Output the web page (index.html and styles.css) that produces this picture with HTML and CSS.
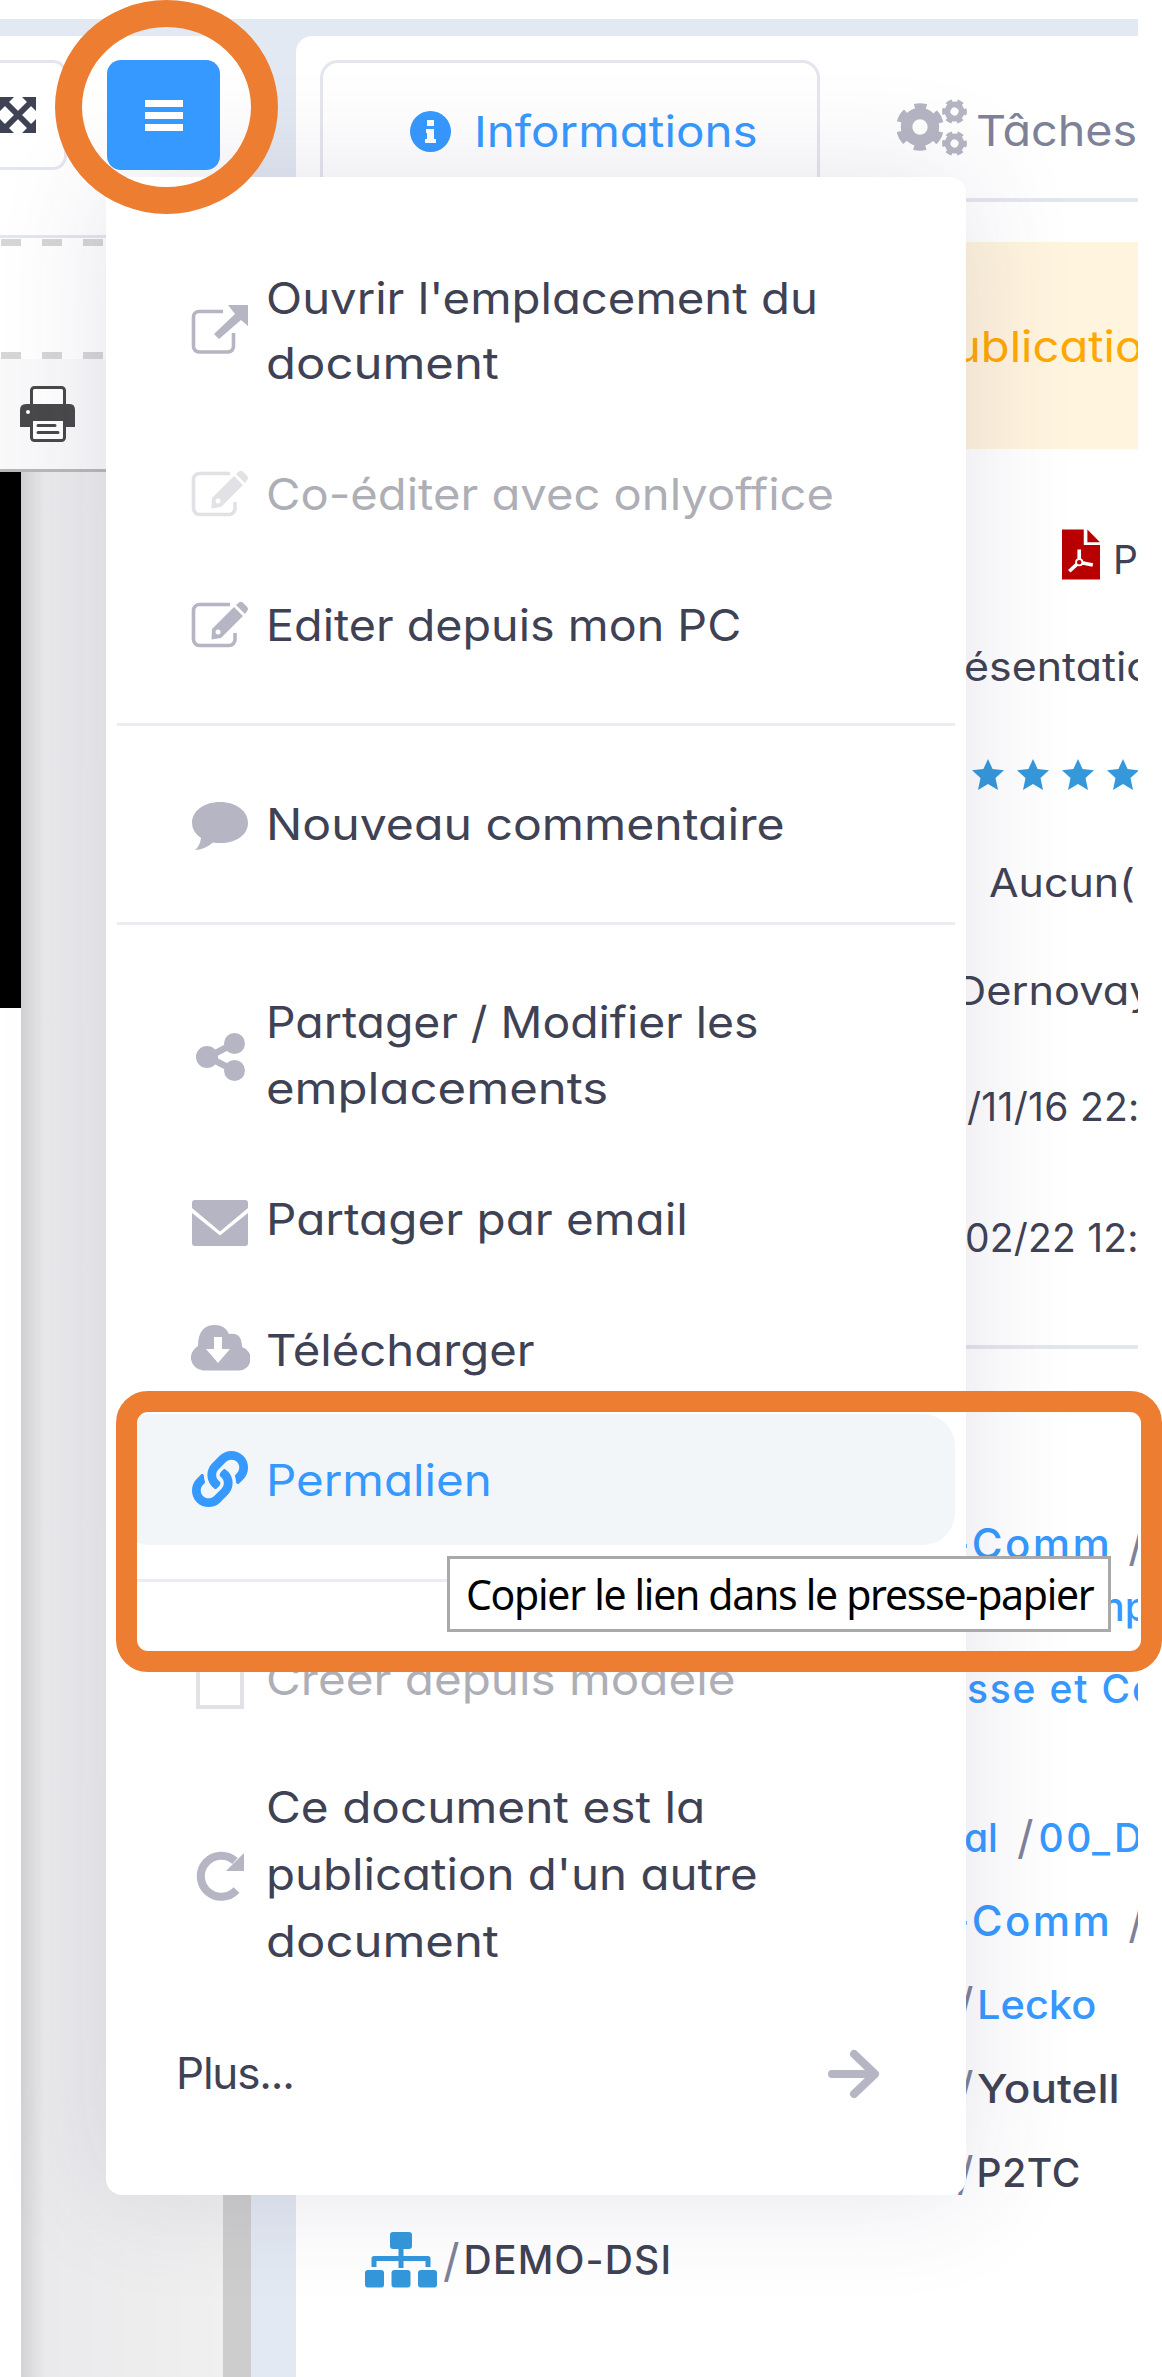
FILE: index.html
```html
<!DOCTYPE html>
<html lang="fr">
<head>
<meta charset="utf-8">
<title>Document - Permalien</title>
<link rel="stylesheet" href="styles.css">
</head>
<body>
<svg class="defs" width="0" height="0" aria-hidden="true">
  <symbol id="edit" viewBox="0 0 60 60">
    <path d="M40 8.500H9.500a6 6 0 0 0-6 6v29a6 6 0 0 0 6 6h29.500a6 6 0 0 0 6-6V37" fill="none" stroke="currentColor" stroke-width="3.600"/>
    <path d="M22 33L44 11l9 9-22 22-9.500 1.500zM46 9l3-2.500q2-1.500 4 .3l4 4q2 2 .3 4L55 18z" fill="currentColor"/>
    <circle cx="28" cy="36" r="2.500" fill="#fff"/>
  </symbol>
  <symbol id="tree" viewBox="0 0 72 56">
    <path d="M36 14V36M9 35V26.500H63V35" fill="none" stroke="currentColor" stroke-width="5" stroke-linejoin="round"/>
    <g fill="currentColor"><rect x="25" width="22" height="17" rx="3"/><rect y="38" width="19" height="17.500" rx="3"/><rect x="26.500" y="38" width="19" height="17.500" rx="3"/><rect x="53" y="38" width="19" height="17.500" rx="3"/></g>
  </symbol>
  <symbol id="star" viewBox="0 0 32 31">
    <path d="M16 0l4.600 10 11.400 1.300-8.500 7.600L26 31l-10-6-10 6 2.500-12.100L0 11.300 11.400 10z" fill="currentColor"/>
  </symbol>
  <symbol id="gear" viewBox="-50 -50 100 100">
    <g fill="none" stroke="currentColor"><circle r="28" stroke-width="24"/><circle r="43" stroke-width="13" pathLength="120" stroke-dasharray="11 9" stroke-dashoffset="-4.500"/></g>
  </symbol>
</svg>

<div class="app">
  <section class="viewer">
    <div class="viewer-bar">
      <div class="fullscreen">
        <svg width="36" height="36" viewBox="0 0 36 36"><path d="M6 6L30 30M30 6L6 30" stroke="#3f4254" stroke-width="6"/><path d="M0 0h14L0 14zM36 0v14L22 0zM0 36V22l14 14zM36 36H22l14-14z" fill="#3f4254"/></svg>
      </div>
      <button class="burger"><i></i><i></i><i></i></button>
    </div>
    <div class="dropzone"></div>
    <div class="pdf-bar">
      <svg width="56" height="56" viewBox="0 0 56 56"><rect x="11.500" y="1.500" width="33" height="53" rx="3" fill="#fff" stroke="#48484a" stroke-width="3"/><path d="M6 18H50q5 0 5 6V41H45V35H11v6H0V24q0-6 6-6z" fill="#48484a"/><circle cx="8" cy="26" r="2" fill="#fff"/><path d="M18 39.500H35M18 46.500H38" stroke="#48484a" stroke-width="3" stroke-linecap="round"/></svg>
    </div>
    <div class="pages">
      <div class="paper"><div class="slide"></div></div>
      <div class="gutter"></div>
      <div class="scroll"></div>
    </div>
  </section>

  <section class="panel">
    <nav class="tabs">
      <div class="tab active">
        <svg width="41" height="41" viewBox="0 0 41 41"><circle cx="20.500" cy="20.500" r="20.500" fill="#3699ff"/><path d="M17 9h7v6h-7zM16 18h8v10h2v4H15v-4h2v-6h-1z" fill="#fff"/></svg>
        <span class="t-info">Informations</span>
      </div>
      <div class="tab">
        <svg class="gears" width="70" height="57" viewBox="0 0 70 57"><use href="#gear" x="-1" y="4" width="48" height="48"/><use href="#gear" x="45" y="0" width="25" height="25" transform="rotate(30 57.500 12.500)"/><use href="#gear" x="45" y="32" width="25" height="25" transform="rotate(30 57.500 44.500)"/></svg>
        <span class="t-task">Tâches</span>
      </div>
    </nav>
    <div class="notice"><span>ublicatio</span></div>
    <div class="props">
      <div class="row r1">
        <svg width="42" height="55" viewBox="0 0 42 55"><path d="M0 0H24V17H42V55H0zM28 0L42 14H28z" fill="#b80000"/><path d="M8 46L19 36V22M19 36L34 39" fill="none" stroke="#fff" stroke-width="4"/><circle cx="19" cy="36" r="3.500" fill="#b80000" stroke="#fff" stroke-width="2"/></svg>
        <span>P</span>
      </div>
      <div class="row r2"><span>ésentatio</span></div>
      <div class="row r3"><svg><use href="#star"/></svg><svg><use href="#star"/></svg><svg><use href="#star"/></svg><svg><use href="#star"/></svg></div>
      <div class="row r4"><span>Aucun(</span></div>
      <div class="row r5"><span>Dernovay</span></div>
      <div class="row r6"><span>/11/16 22:</span></div>
      <div class="row r7"><span>02/22 12:</span></div>
    </div>
    <div class="places">
      <div class="row p1"><a>-Comm</a><span class="sl">/</span></div>
      <div class="row p2"><a>mp</a></div>
      <div class="row p3"><a>sse et Co</a></div>
      <div class="row p4"><a>al</a><span class="sl">/</span><a class="zero">00_D</a></div>
      <div class="row p5"><a>-Comm</a><span class="sl">/</span></div>
      <div class="row p6"><span class="sl">/</span><a>Lecko</a></div>
      <div class="row p7"><span class="sl">/</span><b>Youtell</b></div>
      <div class="row p8"><span class="sl">/</span><b>P2TC</b></div>
      <div class="row p9"><svg width="72" height="56"><use href="#tree"/></svg><span class="sl">/</span><b>DEMO-DSI</b></div>
    </div>
  </section>

  <div class="menu">
    <div class="item">
      <svg viewBox="0 0 60 60"><path d="M33 10.500H9a5.500 5.500 0 0 0-5.500 5.500v29.500a5.500 5.500 0 0 0 5.500 5.500h29a5.500 5.500 0 0 0 5.500-5.500V32" fill="none" stroke="currentColor" stroke-width="3.600"/><path d="M38 4H58V25L51 19 29 38 24 33 45 13z" fill="currentColor"/></svg>
      <p><span class="m1">Ouvrir l'emplacement du</span><span class="m2">document</span></p>
    </div>
    <div class="item off"><svg><use href="#edit"/></svg><p><span class="m3">Co-éditer avec onlyoffice</span></p></div>
    <div class="item"><svg><use href="#edit"/></svg><p><span class="m4">Editer depuis mon PC</span></p></div>
    <hr>
    <div class="item"><svg viewBox="0 0 60 60"><path d="M30 8C46 8 58 17 58 29S46 49 31 49Q27 49 23 48.500Q14 56 5 56Q10 52 11 44Q2 38 2 29C2 17 14 8 30 8z" fill="currentColor"/></svg><p><span class="m5">Nouveau commentaire</span></p></div>
    <hr>
    <div class="item">
      <svg viewBox="0 0 60 60"><path d="M45 17L18 31 45 45" fill="none" stroke="currentColor" stroke-width="6.500"/><g fill="currentColor"><circle cx="17" cy="31" r="11"/><circle cx="44.500" cy="17.500" r="10.500"/><circle cx="44.500" cy="44.500" r="10.500"/></g></svg>
      <p><span class="m6">Partager / Modifier les</span><span class="m7">emplacements</span></p>
    </div>
    <div class="item"><svg viewBox="0 0 60 60"><path d="M5 11H55a3 3 0 0 1 3 3V19L30 42.500 2 19V14a3 3 0 0 1 3-3z" fill="currentColor"/><path d="M2 24L30 46.500 58 24V54a3 3 0 0 1-3 3H5a3 3 0 0 1-3-3z" fill="currentColor"/></svg><p><span class="m8">Partager par email</span></p></div>
    <div class="item"><svg viewBox="0 0 60 60"><path d="M13 50.500A13 13 0 0 1 8 26Q8 5 25 5Q35 5 39 14Q52 12 52 27A12 12 0 0 1 48 50.500z" fill="currentColor"/><path d="M24 17h8v12h8L28 43 16 29h8z" fill="#fff"/></svg><p><span class="m9">Télécharger</span></p></div>
    <div class="item hot"><svg viewBox="-18 0 548 548"><path fill="currentColor" d="M326.612 185.391c59.747 59.809 58.927 155.698.36 214.590-.11.12-.24.25-.36.37l-67.200 67.200c-59.270 59.270-155.699 59.262-214.960 0-59.270-59.260-59.270-155.700 0-214.960l37.106-37.106c9.840-9.840 26.786-3.300 27.294 10.606.648 17.722 3.826 35.527 9.690 52.721 1.986 5.822.567 12.262-3.783 16.612l-13.087 13.087c-28.026 28.026-28.905 73.660-1.155 101.960 28.024 28.579 74.086 28.749 102.325.51l67.200-67.190c28.191-28.191 28.073-73.757 0-101.830-3.701-3.694-7.429-6.564-10.341-8.569a16.037 16.037 0 0 1-6.947-12.606c-.396-10.567 3.348-21.456 11.698-29.806l21.054-21.055c5.521-5.521 14.182-6.199 20.584-1.731a152.482 152.482 0 0 1 20.522 17.197zM467.547 44.449c-59.261-59.262-155.690-59.270-214.960 0l-67.200 67.200c-.12.12-.25.25-.36.37-58.566 58.892-59.387 154.781.36 214.590a152.454 152.454 0 0 0 20.521 17.196c6.402 4.468 15.064 3.789 20.584-1.731l21.054-21.055c8.350-8.350 12.094-19.239 11.698-29.806a16.037 16.037 0 0 0-6.947-12.606c-2.912-2.005-6.640-4.875-10.341-8.569-28.073-28.073-28.191-73.639 0-101.830l67.200-67.190c28.239-28.239 74.300-28.069 102.325.51 27.750 28.300 26.872 73.934-1.155 101.960l-13.087 13.087c-4.350 4.350-5.769 10.790-3.783 16.612 5.864 17.194 9.042 34.999 9.690 52.721.509 13.906 17.454 20.446 27.294 10.606l37.106-37.106c59.271-59.259 59.271-155.699.001-214.959z"/></svg><p><span class="m10">Permalien</span></p></div>
    <hr>
    <div class="item off short"><svg viewBox="0 0 60 60"><path d="M8 4H52V57H8z" fill="none" stroke="currentColor" stroke-width="4"/></svg><p><span class="m11">Créer depuis modèle</span></p></div>
    <div class="item tall">
      <svg viewBox="0 0 60 60"><path d="M46.500 45A20.500 20.500 0 1 1 45 16" fill="none" stroke="currentColor" stroke-width="8"/><path d="M54 8V26H36z" fill="currentColor"/></svg>
      <p><span class="m12">Ce document est la</span><span class="m13">publication d'un autre</span><span class="m2">document</span></p>
    </div>
    <div class="item more"><p class="m15">Plus...</p><svg viewBox="0 0 60 60"><path d="M9 31H50M31 11L52 31 31 51" fill="none" stroke="currentColor" stroke-width="8" stroke-linecap="round" stroke-linejoin="round"/></svg></div>
  </div>
</div>

<div class="ring"></div>
<div class="tooltip"><span>Copier le lien dans le presse-papier</span></div>
<div class="frame"></div>
</body>
</html>
```
FILE: styles.css
```css
* { box-sizing: border-box; }
body {
  margin: 0; padding-top: 19px; width: 1162px; height: 2377px; overflow: hidden;
  position: relative; background: #fff; color: #3f4254;
  font: 400 39px Inter, "Open Sans", sans-serif;
  font-feature-settings: "cv11";
}
p { margin: 0; }
.defs { position: absolute; }
.app {
  position: relative; display: flex; gap: 45px; width: 1138px; height: 2358px;
  padding-top: 17px; overflow: hidden; background: #e2e9f2;
}

/* Document viewer */
.viewer { width: 251px; display: flex; flex-direction: column; background: #fff; border-top-right-radius: 16px; }
.viewer-bar { height: 202px; display: flex; gap: 40px; padding-top: 24px; border-bottom: 3px solid #e4e6ef; }
.fullscreen {
  width: 67px; height: 110px; padding-top: 34px;
  border: 3px solid #e4e6ef; border-left: 0; border-radius: 0 14px 14px 0;
}
.fullscreen svg { display: block; }
.burger {
  position: relative; z-index: 3; width: 113px; height: 110px; border: 0; border-radius: 14px; padding: 0;
  background: #3699ff; display: flex; flex-direction: column; gap: 5px; align-items: center; justify-content: center;
}
.burger i { width: 38px; height: 7px; background: #fff; }
.dropzone {
  height: 121px;
  background:
    repeating-linear-gradient(90deg, #d6d6d6 0 20px, transparent 20px 41px) 1px 1px / 100% 7px no-repeat,
    repeating-linear-gradient(90deg, #d6d6d6 0 20px, transparent 20px 41px) 1px 114px / 100% 7px no-repeat;
}
.pdf-bar { height: 113px; padding: 27px 0 0 20px; background: #f9f9fa; border-bottom: 3px solid #b8b8b8; }
.pages { flex: 1; display: flex; }
.paper { width: 21px; background: #fff; }
.slide { height: 536px; background: #000; }
.gutter { width: 202px; background: linear-gradient(90deg, #d2d2d4, #eaeaec 24px, #ededee 60%, #f0f0f0); }
.scroll { width: 28px; background: #cdcdcd; }

/* Details panel */
.panel { flex: 1; background: #fff; border-top-left-radius: 16px; white-space: nowrap; overflow: hidden; }
.tabs { height: 166px; padding: 24px 0 0 24px; display: flex; gap: 77px; border-bottom: 4px solid #e4e6ef; }
.tab { display: flex; align-items: center; height: 140px; font-size: 43px; color: #7e8299; }
.tab.active { width: 500px; padding-left: 87px; border: 3px solid #e4e6ef; border-bottom: 0; border-radius: 18px 18px 0 0; color: #3699ff; }
.t-info, .t-task, .notice span, .row.p6 a, .row.p7 b, .r2 span, .r4 span, .r5 span { display: inline-block; transform-origin: 0 50%; }
.t-info { margin: -2px 0 0 23px; transform: scaleX(1.105); }
.gears { color: #b5b5c3; margin-top: -5px; }
.t-task { margin: -1px 0 0 9px; transform: scaleX(1.085); }
.notice { margin-top: 40px; height: 207px; padding-left: 657px; line-height: 209px; background: #fff4de; color: #ffa800; font-size: 43px; }
.notice span { transform: scaleX(1.095); }
.props { padding-top: 57px; height: 900px; border-bottom: 4px solid #e4e6ef; }
.row { display: flex; align-items: center; }
.r1 { height: 107px; padding-left: 766px; gap: 13px; }
.r1 svg { margin-top: -11px; }
.r2 { height: 107px; padding-left: 668px; }
.r2 span { transform: scaleX(1.1); }
.r3 { height: 108px; padding-left: 676px; gap: 13px; color: #3498db; }
.r3 svg { width: 32px; height: 31px; flex: none; }
.r4 { height: 109px; padding-left: 693px; }
.r4 span { transform: scaleX(1.1); }
.r5 { height: 106px; padding-left: 659px; }
.r5 span { transform: scaleX(1.11); }
.r6 { height: 126px; padding-left: 671px; letter-spacing: .3px; }
.r7 { height: 136px; padding-left: 669px; letter-spacing: .2px; }
.places { padding-top: 163px; font-weight: 500; color: #3f4254; }
.places a { color: #3699ff; }
.places b { font-weight: 500; }
.sl { color: #7e8299; font-size: 46px; font-weight: 400; letter-spacing: 0; }
.p1, .p2 { height: 63px; }
.p1, .p5 { padding-left: 654px; gap: 16px; font-size: 42px; letter-spacing: 2.400px; }
.p2 { padding-left: 794px; }
.p3 { height: 101px; padding-left: 671px; margin-bottom: 56px; letter-spacing: 1.800px; }
.p4 { height: 84px; padding-left: 668px; }
.p4 .sl { margin: 0 5px 0 19px; }
.zero { letter-spacing: 2.500px; }
.p5 { height: 83px; }
.p6, .p7 { height: 84px; }
.p8 { height: 85px; }
.p6, .p7, .p8 { padding-left: 661px; gap: 3px; }
.p6 a { transform: scaleX(1.065); }
.p7 b { transform: scaleX(1.13); }
.p8 { letter-spacing: .6px; }
.p9 { height: 89px; padding-left: 69px; color: #3498db; letter-spacing: 1.200px; }
.p9 .sl { margin: 0 4px 0 6px; }
.p9 b { color: #3f4254; }

/* Drop-down menu */
.menu {
  position: absolute; left: 106px; top: 158px; width: 860px; height: 2018px; z-index: 2;
  padding: 54px 11px 0; background: #fff; border-radius: 16px;
  box-shadow: 0 0 110px rgba(82, 63, 105, .15);
}
.item {
  display: flex; align-items: center; gap: 16px; padding: 34.600px 0 30.900px 73px;
  font-size: 44px; line-height: 65.500px; white-space: nowrap;
}
.item svg { width: 60px; height: 60px; flex: none; color: #b5b5c3; }
.item p span { display: block; width: max-content; transform-origin: 0 50%; }
.off p { opacity: .42; }
.off svg { opacity: .4; }
.hot { background: #f3f6f9; border-radius: 32px; color: #3699ff; }
.hot svg { color: #3699ff; }
.short { padding-bottom: 27px; }
.tall { line-height: 67px; }
.more { justify-content: space-between; padding-left: 59px; padding-right: 72px; }
hr { margin: 34px 0 30.500px; height: 3px; border: 0; background: #ebedf3; }

.m1 { transform: scaleX(1.074); }
.m2 { transform: scaleX(1.114); }
.m3 { transform: scaleX(1.071); }
.m4 { transform: scaleX(1.061); }
.m5 { transform: scaleX(1.095); }
.m6 { transform: scaleX(1.053); }
.m7 { transform: scaleX(1.115); }
.m8 { transform: scaleX(1.082); }
.m9 { transform: scaleX(1.074); }
.m10 { transform: scaleX(1.079); }
.m11 { transform: scaleX(1.082); }
.m12 { transform: scaleX(1.085); }
.m13 { transform: scaleX(1.077); }
.m15 { letter-spacing: -1.200px; }

/* Callouts */
.ring, .frame, .tooltip { position: absolute; z-index: 5; }
.ring { left: 55px; top: 0; width: 223px; height: 214px; border: 27px solid #ed7d31; border-radius: 50%; }
.frame { left: 116px; top: 1391px; width: 1046px; height: 281px; border: 21px solid #ed7d31; border-radius: 32px; }
.tooltip {
  left: 447px; top: 1556px; width: 664px; height: 76px; padding-left: 16px;
  border: 3px solid #a9a9a9; background: #fff; color: #000; white-space: nowrap;
  font: 41px/70px "Noto Sans", sans-serif; letter-spacing: -1.300px;
}
```
